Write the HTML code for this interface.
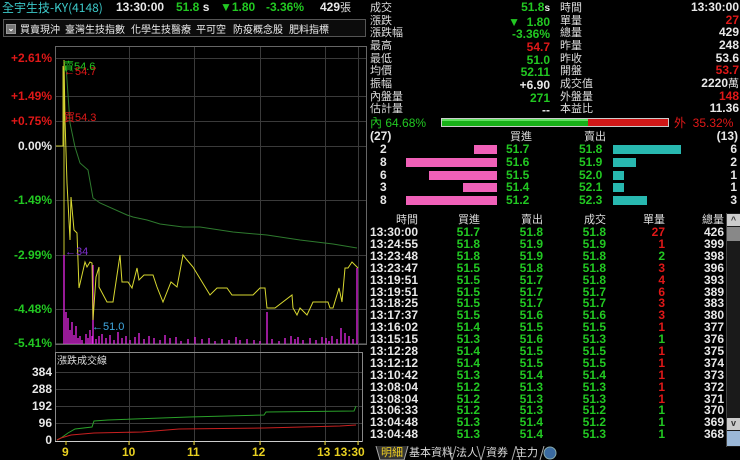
<!DOCTYPE html>
<html><head><meta charset="utf-8"><style>
*{margin:0;padding:0;box-sizing:border-box}
body{width:740px;height:460px;background:#000;overflow:hidden;position:relative;font-family:"Liberation Sans","Noto Sans CJK TC",sans-serif;font-weight:bold;font-size:12px;color:#e8e8e8}
.a{position:absolute;white-space:nowrap;line-height:13px}
.r{text-align:right}
.g{color:#22c822}.rd{color:#e01818}.w{color:#e8e8e8}
.cj{font-family:"Noto Sans CJK TC","Liberation Sans",sans-serif;font-weight:normal;font-size:11px;color:#ddd}
.tb{font-size:10px!important;top:22px!important}
.tr{position:absolute;left:0;width:740px;height:12px;line-height:12px}
.tr span{position:absolute;text-align:right;width:60px}
</style></head><body>
<div class="a cj" style="left:2px;top:1px;color:#3cc8c8;font-size:12px">全宇生技-KY(4148)</div>
<div class="a" style="left:116px;top:1px;font-size:12px">13:30:00</div>
<div class="a g" style="left:176px;top:1px">51.8 <span class="w">s</span></div>
<div class="a g" style="left:220px;top:1px">▼1.80</div>
<div class="a g" style="left:266px;top:1px">-3.36%</div>
<div class="a" style="left:320px;top:1px">429<span class="cj">張</span></div>
<div class="a" style="left:3px;top:19px;width:363px;height:18px;border:1px solid #555;background:#0c0c0c"></div>
<div class="a" style="left:6px;top:24px;width:10px;height:10px;background:#777;border:1px solid #999;color:#fff;font-size:8px;line-height:8px;text-align:center">⌄</div>
<div class="a cj tb" style="left:20px;color:#eee">買賣現沖</div>
<div class="a cj tb" style="left:65px;color:#eee">臺灣生技指數</div>
<div class="a cj tb" style="left:131px;color:#eee">化學生技醫療</div>
<div class="a cj tb" style="left:196px;color:#eee">平可空</div>
<div class="a cj tb" style="left:233px;color:#eee">防疫概念股</div>
<div class="a cj tb" style="left:289px;color:#eee">肥料指標</div>

<div class="a rd r" style="left:0;top:52px;width:52px">+2.61%</div>
<div class="a rd r" style="left:0;top:90px;width:52px">+1.49%</div>
<div class="a rd r" style="left:0;top:115px;width:52px">+0.75%</div>
<div class="a r" style="left:0;top:140px;width:52px">0.00%</div>
<div class="a g r" style="left:0;top:194px;width:52px">-1.49%</div>
<div class="a g r" style="left:0;top:249px;width:52px">-2.99%</div>
<div class="a g r" style="left:0;top:303px;width:52px">-4.48%</div>
<div class="a g r" style="left:0;top:337px;width:52px">-5.41%</div>
<div class="a r" style="left:0;top:366px;width:52px">384</div>
<div class="a r" style="left:0;top:383px;width:52px">288</div>
<div class="a r" style="left:0;top:400px;width:52px">192</div>
<div class="a r" style="left:0;top:417px;width:52px">96</div>
<div class="a r" style="left:0;top:434px;width:52px">0</div>
<div class="a" style="left:62px;top:446px;color:#e8d020">9</div>
<div class="a" style="left:122px;top:446px;color:#e8d020">10</div>
<div class="a" style="left:187px;top:446px;color:#e8d020">11</div>
<div class="a" style="left:252px;top:446px;color:#e8d020">12</div>
<div class="a" style="left:317px;top:446px;color:#e8d020">13</div>
<div class="a" style="left:334px;top:446px;color:#e8d020">13:30</div>

<svg class="a" style="left:0;top:0" width="370" height="460">
<g stroke="#3a3a3a" stroke-width="1" fill="none">
<path d="M55.5 46V352M129.5 46V445M194.5 46V445M260.5 46V445M325.5 46V445M358.5 46V445"/>
<path d="M55 58.5H367M55 96.5H367M55 121.5H367M55 146.5H367M55 200.5H367M55 255.5H367M55 309.5H367M55 343.5H367"/>
<path d="M55 372.5H362M55 389.5H362M55 406.5H362M55 423.5H362"/>
</g>
<rect x="55.5" y="46.5" width="311" height="298" fill="none" stroke="#666"/>
<rect x="55.5" y="352.5" width="307" height="89" fill="none" stroke="#888"/>
<path d="M55 441.5H362" stroke="#ccc"/>
<g stroke="#e8d020"><path d="M66 441v4M129 441v4M194 441v4M260 441v4M325 441v4M358 441v4"/></g>
<path d="M56 146H63V66L64 70V255" stroke="#c8c830" fill="none"/>
<g stroke="#e828e8" stroke-width="1.3">
<path d="M64 344V255M66 344V312M68 344V318M70 344V330M72 344V322M74 344V335M76 344V326M78 344V338M80 344V336M82 344V340M86 344V334M88 344V338M90 344V330M92 344V336M93 344V265M96 344V339M99 344V336M102 344V334M106 344V338M110 344V335M114 344V340M118 344V332M122 344V338M126 344V336M130 344V340M135 344V337M139 344V333M144 344V339M149 344V336M154 344V338M160 344V340M165 344V335M170 344V338M176 344V337M181 344V341M188 344V339M195 344V337M202 344V339M209 344V338M215 344V341M222 344V339M229 344V340M236 344V337M240 344V340M247 344V339M254 344V340M260 344V341M267 344V312M272 344V339M279 344V341M285 344V338M291 344V336M295 344V339M298 344V337M303 344V340M310 344V338M316 344V340M322 344V337M326 344V338M329 344V341M332 344V336M337 344V339M341 344V328M345 344V333M349 344V336M353 344V339M357 344V268"/>
</g>
<polyline fill="none" stroke="#2e7a2e" stroke-width="1" points="66,66 70,123 75,147 80,163 88,170 93,198 100,203 127,215 133,217 147,220 160,224 183,227 200,227 233,232 267,235 300,240 333,244 357,248"/>
<polyline fill="none" stroke="#d8d830" stroke-width="1" points="64,60 65,120 67,183 70,240 71,197 74,230 77,233 79,288 85,262 87,267 90,262 92,263 93,320 96,277 99,267 99,287 107,302 113,302 120,255 122,282 128,282 132,288 137,268 139,280 144,275 153,275 157,287 163,302 171,282 177,287 183,255 187,260 193,267 210,295 217,288 227,288 232,295 253,295 260,288 265,288 267,308 275,308 292,295 293,308 297,315 300,308 307,315 313,302 328,302 330,308 333,308 339,288 342,302 345,268 348,268 352,262 358,268"/>
<polyline fill="none" stroke="#2aa02a" stroke-width="1" points="57,440 61,438 68,433 75,429 92,427 94,421 108,420 189,417 264,415 266,412 354,411 356,406"/>
<polyline fill="none" stroke="#c82020" stroke-width="1" points="57,440 61,438 71,435 94,433 142,432 179,429 264,428 340,426 356,425"/>
</svg>
<div class="a g" style="left:63px;top:61px;font-weight:normal;font-size:11px">賣54.6</div>
<div class="a rd" style="left:64px;top:66px;font-weight:normal;font-size:11px">←54.7</div>
<div class="a rd" style="left:64px;top:112px;font-weight:normal;font-size:11px">買54.3</div>
<div class="a" style="left:65px;top:246px;font-weight:normal;font-size:11px;color:#8030d0">←34</div>
<div class="a" style="left:92px;top:321px;font-weight:normal;font-size:11px;color:#40a8e0">←51.0</div>
<div class="a cj" style="left:57px;top:353px;font-size:10px">漲跌成交線</div>

<div class="a cj" style="left:370px;top:1px;line-height:12.65px">成交<br>漲跌<br>漲跌幅<br>最高<br>最低<br>均價<br>振幅<br>內盤量<br>估計量</div>
<div class="a r" style="left:440px;top:1px;width:110px;line-height:12.65px">
<span class="g">51.8<span class="w" style="font-size:10px">s</span></span><br><span class="g">▼ &nbsp;1.80</span><br><span class="g">-3.36%</span><br><span class="rd">54.7</span><br><span class="g">51.0</span><br><span class="g">52.11</span><br>+6.90<br><span class="g">271</span><br>--</div>
<div class="a cj" style="left:560px;top:1px;line-height:12.65px">時間<br>單量<br>總量<br>昨量<br>昨收<br>開盤<br>成交值<br>外盤量<br>本益比</div>
<div class="a r" style="left:620px;top:1px;width:119px;line-height:12.65px">13:30:00<br><span class="rd">27</span><br>429<br>248<br>53.6<br><span class="rd">53.7</span><br>2220<span class="cj">萬</span><br><span class="rd">148</span><br>11.36</div>
<div class="a g" style="left:370px;top:117px;font-weight:normal">內 64.68%</div>
<div class="a" style="left:441px;top:118px;width:228px;height:9px;border:1px solid #ccc;background:#d01818"><div style="width:146px;height:7px;background:#18b018;border-top:2px solid #60e060"></div></div>
<div class="a rd" style="left:674px;top:117px;font-weight:normal">外 &nbsp;35.32%</div>
<div class="a" style="left:370px;top:130px">(27)</div>
<div class="a cj" style="left:510px;top:130px">買進</div>
<div class="a cj" style="left:584px;top:130px">賣出</div>
<div class="a r" style="left:690px;top:130px;width:48px">(13)</div>
<div class="a" style="left:380px;top:143px;line-height:12.8px">2<br>8<br>6<br>3<br>8</div>
<div class="a g" style="left:506px;top:143px;line-height:12.8px">51.7<br>51.6<br>51.5<br>51.4<br>51.2</div>
<div class="a g" style="left:579px;top:143px;line-height:12.8px">51.8<br>51.9<br>52.0<br>52.1<br>52.3</div>
<div class="a r" style="left:700px;top:143px;width:37px;line-height:12.8px">6<br>2<br>1<br>1<br>3</div>
<div class="a" style="left:474px;top:145px;width:23px;height:9px;background:#f060b8"></div>
<div class="a" style="left:406px;top:158px;width:91px;height:9px;background:#f060b8"></div>
<div class="a" style="left:429px;top:171px;width:68px;height:9px;background:#f060b8"></div>
<div class="a" style="left:463px;top:183px;width:34px;height:9px;background:#f060b8"></div>
<div class="a" style="left:406px;top:196px;width:91px;height:9px;background:#f060b8"></div>
<div class="a" style="left:613px;top:145px;width:68px;height:9px;background:#28b8b0"></div>
<div class="a" style="left:613px;top:158px;width:23px;height:9px;background:#28b8b0"></div>
<div class="a" style="left:613px;top:171px;width:11px;height:9px;background:#28b8b0"></div>
<div class="a" style="left:613px;top:183px;width:11px;height:9px;background:#28b8b0"></div>
<div class="a" style="left:613px;top:196px;width:34px;height:9px;background:#28b8b0"></div>

<div class="tr cj" style="top:213px"><span style="left:358px" class="cj">時間</span><span style="left:420px">買進</span><span style="left:483px">賣出</span><span style="left:546px">成交</span><span style="left:605px">單量</span><span style="left:664px">總量</span></div>
<div class="tr" style="top:226px"><span style="left:358px">13:30:00</span><span class="g" style="left:420px">51.7</span><span class="g" style="left:483px">51.8</span><span class="g" style="left:546px">51.8</span><span class="rd" style="left:605px">27</span><span style="left:664px">426</span></div>
<div class="tr" style="top:238px"><span style="left:358px">13:24:55</span><span class="g" style="left:420px">51.8</span><span class="g" style="left:483px">51.9</span><span class="g" style="left:546px">51.9</span><span class="rd" style="left:605px">1</span><span style="left:664px">399</span></div>
<div class="tr" style="top:250px"><span style="left:358px">13:23:48</span><span class="g" style="left:420px">51.8</span><span class="g" style="left:483px">51.9</span><span class="g" style="left:546px">51.8</span><span class="g" style="left:605px">2</span><span style="left:664px">398</span></div>
<div class="tr" style="top:262px"><span style="left:358px">13:23:47</span><span class="g" style="left:420px">51.5</span><span class="g" style="left:483px">51.8</span><span class="g" style="left:546px">51.8</span><span class="rd" style="left:605px">3</span><span style="left:664px">396</span></div>
<div class="tr" style="top:274px"><span style="left:358px">13:19:51</span><span class="g" style="left:420px">51.5</span><span class="g" style="left:483px">51.7</span><span class="g" style="left:546px">51.8</span><span class="rd" style="left:605px">4</span><span style="left:664px">393</span></div>
<div class="tr" style="top:286px"><span style="left:358px">13:19:51</span><span class="g" style="left:420px">51.5</span><span class="g" style="left:483px">51.7</span><span class="g" style="left:546px">51.7</span><span class="rd" style="left:605px">6</span><span style="left:664px">389</span></div>
<div class="tr" style="top:297px"><span style="left:358px">13:18:25</span><span class="g" style="left:420px">51.5</span><span class="g" style="left:483px">51.7</span><span class="g" style="left:546px">51.7</span><span class="rd" style="left:605px">3</span><span style="left:664px">383</span></div>
<div class="tr" style="top:309px"><span style="left:358px">13:17:37</span><span class="g" style="left:420px">51.5</span><span class="g" style="left:483px">51.6</span><span class="g" style="left:546px">51.6</span><span class="rd" style="left:605px">3</span><span style="left:664px">380</span></div>
<div class="tr" style="top:321px"><span style="left:358px">13:16:02</span><span class="g" style="left:420px">51.4</span><span class="g" style="left:483px">51.5</span><span class="g" style="left:546px">51.5</span><span class="rd" style="left:605px">1</span><span style="left:664px">377</span></div>
<div class="tr" style="top:333px"><span style="left:358px">13:15:15</span><span class="g" style="left:420px">51.3</span><span class="g" style="left:483px">51.6</span><span class="g" style="left:546px">51.3</span><span class="g" style="left:605px">1</span><span style="left:664px">376</span></div>
<div class="tr" style="top:345px"><span style="left:358px">13:12:28</span><span class="g" style="left:420px">51.4</span><span class="g" style="left:483px">51.5</span><span class="g" style="left:546px">51.5</span><span class="rd" style="left:605px">1</span><span style="left:664px">375</span></div>
<div class="tr" style="top:357px"><span style="left:358px">13:12:12</span><span class="g" style="left:420px">51.4</span><span class="g" style="left:483px">51.5</span><span class="g" style="left:546px">51.5</span><span class="rd" style="left:605px">1</span><span style="left:664px">374</span></div>
<div class="tr" style="top:369px"><span style="left:358px">13:10:42</span><span class="g" style="left:420px">51.3</span><span class="g" style="left:483px">51.4</span><span class="g" style="left:546px">51.4</span><span class="rd" style="left:605px">1</span><span style="left:664px">373</span></div>
<div class="tr" style="top:381px"><span style="left:358px">13:08:04</span><span class="g" style="left:420px">51.2</span><span class="g" style="left:483px">51.3</span><span class="g" style="left:546px">51.3</span><span class="rd" style="left:605px">1</span><span style="left:664px">372</span></div>
<div class="tr" style="top:393px"><span style="left:358px">13:08:04</span><span class="g" style="left:420px">51.2</span><span class="g" style="left:483px">51.3</span><span class="g" style="left:546px">51.3</span><span class="rd" style="left:605px">1</span><span style="left:664px">371</span></div>
<div class="tr" style="top:404px"><span style="left:358px">13:06:33</span><span class="g" style="left:420px">51.2</span><span class="g" style="left:483px">51.3</span><span class="g" style="left:546px">51.2</span><span class="g" style="left:605px">1</span><span style="left:664px">370</span></div>
<div class="tr" style="top:416px"><span style="left:358px">13:04:48</span><span class="g" style="left:420px">51.3</span><span class="g" style="left:483px">51.4</span><span class="g" style="left:546px">51.2</span><span class="g" style="left:605px">1</span><span style="left:664px">369</span></div>
<div class="tr" style="top:428px"><span style="left:358px">13:04:48</span><span class="g" style="left:420px">51.3</span><span class="g" style="left:483px">51.4</span><span class="g" style="left:546px">51.3</span><span class="g" style="left:605px">1</span><span style="left:664px">368</span></div>

<div class="a" style="left:726px;top:213px;width:14px;height:234px;background:#1a1a1a;border-left:1px solid #444"></div>
<div class="a" style="left:727px;top:214px;width:13px;height:12px;background:#ccc;color:#333;font-size:9px;text-align:center;line-height:12px">^</div>
<div class="a" style="left:727px;top:227px;width:13px;height:14px;background:#888"></div>
<div class="a" style="left:727px;top:418px;width:13px;height:12px;background:#ccc;color:#333;font-size:9px;text-align:center;line-height:10px">v</div>
<div class="a" style="left:727px;top:431px;width:13px;height:15px;background:#9bb8d8"></div>

<svg class="a" style="left:368px;top:446px" width="240" height="14"><path d="M8.5 0L12.5 14H35.5L39.5 0Z" fill="#333"/><path d="M8 0L12 14H36L40 0M40 0L36 14M80 0L84 14M84 14L88 0M109 0L113 14M113 14L117 0M148 0L144 14M148 0L152 14M176 0L172 14" stroke="#aaa" fill="none"/><circle cx="182" cy="7" r="6" fill="#3a6aa0" stroke="#8aa" /></svg>
<div class="a cj" style="left:381px;top:446px;color:#f0d020">明細</div>
<div class="a cj" style="left:409px;top:446px">基本資料</div>
<div class="a cj" style="left:456px;top:446px">法人</div>
<div class="a cj" style="left:486px;top:446px">資券</div>
<div class="a cj" style="left:516px;top:446px">主力</div>
</body></html>
